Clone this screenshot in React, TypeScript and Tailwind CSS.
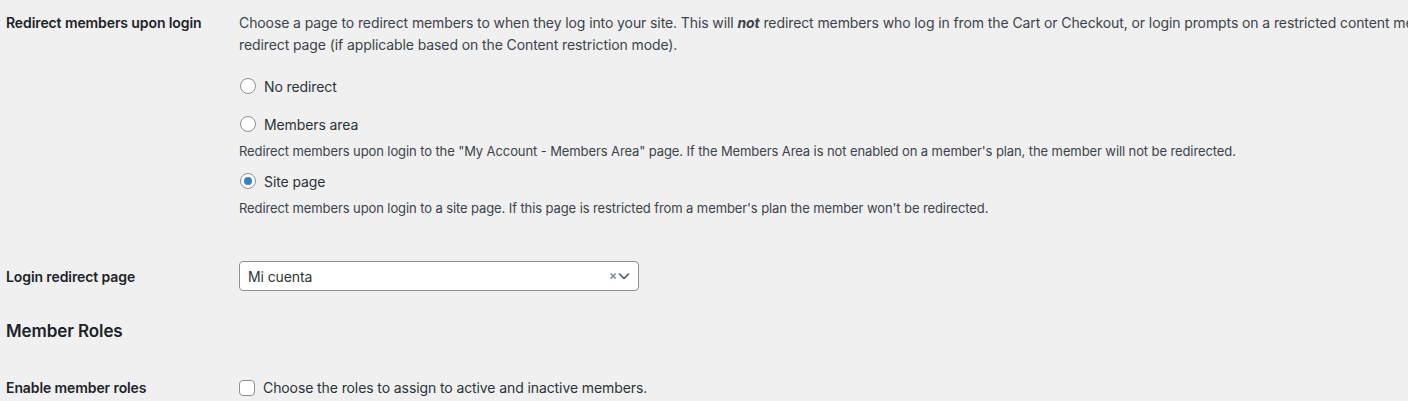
import React from 'react';

const font = { fontFamily: 'Inter, "Noto Sans", "Liberation Sans", sans-serif' };

function Radio({ checked = false }: { checked?: boolean }) {
  return (
    <span className="w-4 h-4 shrink-0 rounded-full border border-[#8c8f94] bg-white flex items-center justify-center">
      {checked && <span className="w-2 h-2 rounded-full bg-[#3582c4]" />}
    </span>
  );
}

function RadioRow({ label, checked }: { label: string; checked?: boolean }) {
  return (
    <label className="flex items-center gap-2 h-[22px] pl-px text-[14px] text-[#2c3338]">
      <Radio checked={checked} />
      <span>{label}</span>
    </label>
  );
}

function Hint({ children }: { children: React.ReactNode }) {
  return <p className="text-[13px] leading-5 text-[#3c434a] whitespace-nowrap">{children}</p>;
}

export default function App() {
  return (
    <div className="w-[1408px] h-[401px] overflow-hidden bg-[#f0f0f1] text-[#3c434a] tracking-[-0.1px]" style={font}>
      <div className="pl-[6px]">
        {/* Redirect members upon login */}
        <div className="flex pt-[12px]">
          <div className="w-[233px] shrink-0 text-[14px] leading-[22px] font-semibold text-[#1d2327]">
            Redirect members upon login
          </div>
          <div className="flex flex-col">
            <p className="text-[14px] leading-[22px] whitespace-nowrap">
              Choose a page to redirect members to when they log into your site. This will <strong><em>not</em></strong> redirect members who log in from the Cart or Checkout, or login prompts on a restricted content message, to the
              <br />
              redirect page (if applicable based on the Content restriction mode).
            </p>
            <div className="mt-[19px]">
              <RadioRow label="No redirect" />
            </div>
            <div className="mt-4">
              <RadioRow label="Members area" />
            </div>
            <div className="mt-[6px]">
              <Hint>Redirect members upon login to the "My Account - Members Area" page. If the Members Area is not enabled on a member's plan, the member will not be redirected.</Hint>
            </div>
            <div className="mt-[9px]">
              <RadioRow label="Site page" checked />
            </div>
            <div className="mt-[6px]">
              <Hint>Redirect members upon login to a site page. If this page is restricted from a member's plan the member won't be redirected.</Hint>
            </div>
          </div>
        </div>

        {/* Login redirect page */}
        <div className="flex items-center mt-[43px]">
          <div className="w-[233px] shrink-0 text-[14px] font-semibold text-[#1d2327]">Login redirect page</div>
          <div className="w-[400px] h-[30px] bg-white border border-[#8c8f94] rounded-[4px] flex items-center pl-2 pr-2">
            <span className="flex-1 text-[14px] text-[#2c3338]">Mi cuenta</span>
            <span className="text-[12px] leading-none text-[#8c8f94] font-bold mr-px">×</span>
            <svg width="12" height="12" viewBox="0 0 12 12" fill="none" stroke="#50575e" strokeWidth="1.6" strokeLinecap="round" strokeLinejoin="round">
              <path d="M1.5 4 6 8.5 10.5 4" />
            </svg>
          </div>
        </div>

        {/* Member Roles heading */}
        <h2 className="mt-[29px] text-[17px] leading-[22px] font-semibold text-[#1d2327]">Member Roles</h2>

        {/* Enable member roles */}
        <div className="flex items-center mt-[35px]">
          <div className="w-[233px] shrink-0 text-[14px] font-semibold text-[#1d2327]">Enable member roles</div>
          <label className="flex items-center gap-2 text-[14px] text-[#2c3338]">
            <span className="w-4 h-4 rounded-[4px] border border-[#8c8f94] bg-white" />
            <span>Choose the roles to assign to active and inactive members.</span>
          </label>
        </div>
      </div>
    </div>
  );
}
